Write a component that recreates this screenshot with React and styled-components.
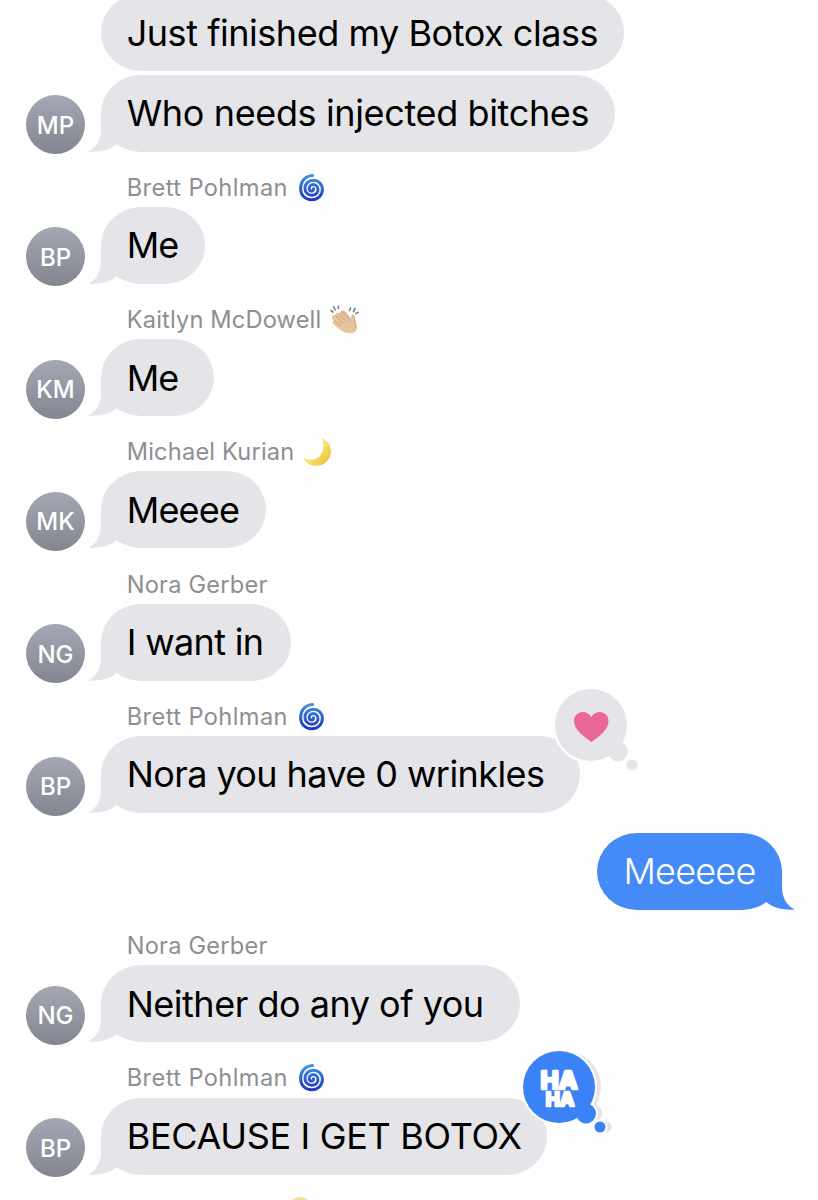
import styled, { createGlobalStyle } from 'styled-components';

const GlobalStyle = createGlobalStyle`
  * {
    box-sizing: border-box;
  }
  body {
    margin: 0;
    background: #fefefe;
    font-family: Inter, 'Liberation Sans', sans-serif;
  }
`;

const Chat = styled.main`
  display: flex;
  flex-direction: column;
  width: 818px;
  height: 1200px;
  overflow: hidden;
`;

const Thread = styled.div`
  display: flex;
  flex-direction: column;
  flex-shrink: 0;
  margin-top: -6px;
`;

const Sender = styled.div`
  display: flex;
  align-items: center;
  gap: ${({ $gap }) => $gap || 10}px;
  height: 55.3px;
  padding: 17px 0 0 126.7px;
  flex-shrink: 0;
  color: #8e8e93;
  font-size: 23.6px;
  line-height: 30px;
  letter-spacing: ${({ $spacing }) => $spacing || 0.42}px;
  white-space: nowrap;
`;

const Row = styled.div`
  display: flex;
  align-items: flex-end;
  justify-content: ${({ $mine }) => ($mine ? 'flex-end' : 'flex-start')};
  height: 77px;
  margin-top: ${({ $top }) => $top || 0}px;
  padding: 0 36px 0 26px;
  flex-shrink: 0;
`;

const Avatar = styled.div`
  display: flex;
  align-items: center;
  justify-content: center;
  width: 59px;
  height: 59px;
  margin: 0 16px -2.6px 0;
  padding-top: 1px;
  border-radius: 50%;
  background: linear-gradient(#a4a8b4, #838690);
  color: #fff;
  font-size: 24px;
  font-weight: 500;
  visibility: ${({ $hidden }) => ($hidden ? 'hidden' : 'visible')};
`;

const Bubble = styled.div`
  position: relative;
  display: flex;
  align-items: center;
  width: ${({ $width }) => $width}px;
  height: 77px;
  padding: 0 0 0 ${({ $mine }) => ($mine ? 26.5 : 25.7)}px;
  border-radius: 40px / 38.5px;
  background: ${({ $mine }) => ($mine ? '#458bf7' : '#e5e4e9')};
  color: ${({ $mine }) => ($mine ? '#fff' : '#000')};
  font-size: 36px;
  font-weight: ${({ $mine }) => ($mine ? 340 : 400)};
  letter-spacing: ${({ $spacing }) => $spacing || 0}px;
  white-space: nowrap;
`;

const TailSvg = styled.svg`
  position: absolute;
  bottom: 0;
  ${({ $mine }) => ($mine ? 'right: -14px; transform: scaleX(-1);' : 'left: -14px;')}
`;

const Tapback = styled.svg`
  position: absolute;
  top: ${({ $top }) => $top}px;
  left: ${({ $left }) => $left}px;
  overflow: visible;
  letter-spacing: 0;
`;

const Tail = ({ mine }) => (
  <TailSvg $mine={mine} width="54" height="77" viewBox="-14 0 54 77">
    <path
      d="M0 38V54C0 64 -4 72 -12.6 76.6C-3 77.4 8 75.5 15.5 69.3L20 60V38Z"
      fill={mine ? '#458bf7' : '#e5e4e9'}
    />
  </TailSvg>
);

const Cyclone = () => (
  <svg width="28" height="30" viewBox="0 0 28 30">
    <defs>
      <linearGradient id="cyclone" x1="0" y1="0" x2="0" y2="1">
        <stop offset="0" stopColor="#3f93dc" />
        <stop offset="1" stopColor="#2236c4" />
      </linearGradient>
    </defs>
    <path
      d="M14.5 2.5C6.5 3 2.6 9 2.6 15.5C2.6 22.5 7.6 26.8 13.6 26.8C20 26.8 24.4 22 24.4 16.6C24.4 11 20.4 7.3 15.4 7.3C10.4 7.3 7 11 7 15.2C7 19.4 10 22.3 13.8 22.3C17.6 22.3 20 19.7 20 16.7C20 13.7 17.8 11.6 15.2 11.6C12.7 11.6 11.2 13.4 11.2 15.2C11.2 17 12.3 18 13.7 18C15 18 15.7 17 15.5 15.8"
      fill="none"
      stroke="url(#cyclone)"
      strokeWidth="3"
      strokeLinecap="round"
    />
  </svg>
);

const Clap = () => (
  <svg width="32" height="32" viewBox="0 0 32 32">
    <g stroke="#7c8793" strokeWidth="1.7" strokeLinecap="round">
      <path d="M2 6.5L4 8M4.5 2.8L6.2 5.8M9.3 2.3V4.5M21.5 4L20.5 6.5M26 4.5L24.5 7.5M29 8.5L26.8 9.5" />
    </g>
    <path
      d="M12 7.5C13.5 5.5 15.5 6.5 16.5 8L22 14.5L22.5 11.5C23.3 9.5 25.5 10.5 25.5 12.5L27.5 21C29 26 25 30 19.5 29L9 21Z"
      fill="#d9b48d"
    />
    <path
      d="M3.2 12.2C3.8 10.3 5.5 10.4 6.5 11.3C6.2 9 8.2 8 9.8 9.5C10.2 7.7 12.2 7.5 13.4 9L21 17.5L21.6 14.6C22.2 12.8 24.3 13.2 24.5 15.2L26 21.5C26.7 26.5 22.5 30.3 17 28.8C12.5 27.5 8.7 23.8 4.5 20C2.8 18.4 3.8 16.5 5.2 16.5C3 15 2.6 13.4 3.2 12.2Z"
      fill="#e6c49c"
    />
    <path
      d="M6.5 11.5L14.5 19.5M9.8 9.8L17 17.3M5.2 16.5L12 22.3"
      stroke="#c49c74"
      strokeWidth="0.9"
      fill="none"
    />
  </svg>
);

const Moon = () => (
  <svg width="30" height="30" viewBox="0 0 30 30">
    <defs>
      <linearGradient id="moon" x1="0" y1="0" x2="1" y2="1">
        <stop offset="0.35" stopColor="#f9e98d" />
        <stop offset="0.75" stopColor="#f0cf4a" />
        <stop offset="1" stopColor="#d9ad31" />
      </linearGradient>
    </defs>
    <path
      d="M19.5 1C26.5 3.5 30.2 10.5 28.6 17.3C26.8 25 19.8 29.7 12.3 28.7C7 28 2.8 25 .8 20.2C7 24 13.8 23.6 18 18.8C22 14.2 22.4 7 19.5 1Z"
      fill="url(#moon)"
    />
  </svg>
);

const Face = () => (
  <svg width="30" height="30" viewBox="0 0 30 30">
    <circle cx="14" cy="14.5" r="13.5" fill="#f5e09a" />
  </svg>
);

// circle with its two trailing dots, drawn round the centre of the circle
const Cloud = () => (
  <>
    <circle r="36" />
    <circle cx="27" cy="26.5" r="10" />
    <circle cx="41" cy="40" r="5.5" />
  </>
);

const Heart = () => (
  <Tapback $left={453} $top={-48} width="74" height="74" viewBox="-37 -37 74 74">
    <circle r="38.5" fill="#fefefe" />
    <g fill="#e5e4e9">
      <Cloud />
    </g>
    <path
      d="M.5 17C-6.5 12.2 -17 5 -17 -4C-17 -9.5 -13 -13 -8.3 -13C-4.5 -13 -1.2 -11 .3 -7.7C1.8 -11 5 -13 8.8 -13C13.5 -13 17.5 -9.5 17.5 -4C17.5 5 7.5 12.2 .5 17Z"
      fill="#ea6898"
    />
  </Tapback>
);

const Haha = () => (
  <Tapback $left={421} $top={-48} width="74" height="74" viewBox="-37 -37 74 74">
    <g fill="#e5e4e9" transform="translate(6 0)">
      <Cloud />
    </g>
    <g fill="#fefefe" stroke="#fefefe" strokeWidth="4">
      <Cloud />
    </g>
    <g fill="#3b82f6">
      <Cloud />
    </g>
    <text
      fill="#fff"
      stroke="#fff"
      strokeWidth="2.4"
      strokeLinejoin="round"
      fontFamily="Inter, sans-serif"
      fontWeight="800"
    >
      <tspan x="-18.6" y="2" fontSize="24.5">
        HA
      </tspan>
      <tspan x="-13.2" y="19.4" fontSize="18.8">
        HA
      </tspan>
    </text>
  </Tapback>
);

const Message = ({ initials, text, width, spacing, top, mine, first, children }) => (
  <Row $mine={mine} $top={top}>
    {!mine && <Avatar $hidden={!initials}>{initials}</Avatar>}
    <Bubble $width={width} $spacing={spacing} $mine={mine}>
      {!first && <Tail mine={mine} />}
      {text}
      {children}
    </Bubble>
  </Row>
);

const App = () => (
  <Chat>
    <GlobalStyle />
    <Thread>
      <Message text="Just finished my Botox class" width={523} spacing={-0.46} first />
      <Message
        initials="MP"
        text="Who needs injected bitches"
        width={514}
        spacing={-0.36}
        top={3.5}
      />
      <Sender>
        Brett Pohlman <Cyclone />
      </Sender>
      <Message initials="BP" text="Me" width={104} spacing={-0.9} />
      <Sender $spacing={0.18} $gap={8}>
        Kaitlyn McDowell <Clap />
      </Sender>
      <Message initials="KM" text="Me" width={113} spacing={-0.9} />
      <Sender $spacing={0.2} $gap={8}>
        Michael Kurian <Moon />
      </Sender>
      <Message initials="MK" text="Meeee" width={165} spacing={-0.8} />
      <Sender $spacing={0.22}>Nora Gerber</Sender>
      <Message initials="NG" text="I want in" width={190} spacing={-0.65} />
      <Sender>
        Brett Pohlman <Cyclone />
      </Sender>
      <Message
        initials="BP"
        text="Nora you have 0 wrinkles"
        width={479}
        spacing={-0.58}
      >
        <Heart />
      </Message>
      <Message text="Meeeee" width={185} spacing={-0.8} top={20} mine />
      <Sender $spacing={0.22}>Nora Gerber</Sender>
      <Message
        initials="NG"
        text="Neither do any of you"
        width={419}
        spacing={-0.48}
      />
      <Sender>
        Brett Pohlman <Cyclone />
      </Sender>
      <Message
        initials="BP"
        text="BECAUSE I GET BOTOX"
        width={446}
        spacing={-0.33}
      >
        <Haha />
      </Message>
      <Sender $gap={159}>
        <span />
        <Face />
      </Sender>
    </Thread>
  </Chat>
);

export default App;
